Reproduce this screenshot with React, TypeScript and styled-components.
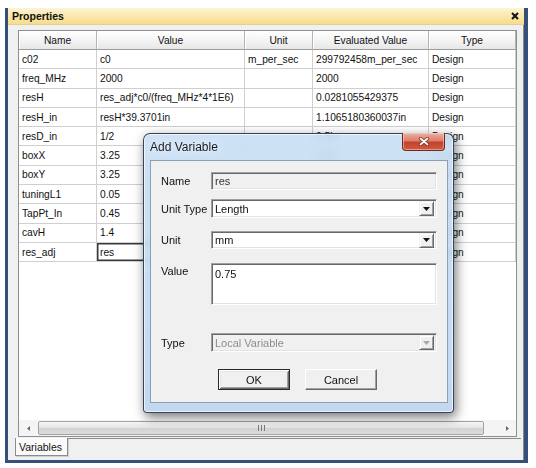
import React from "react";
import styled, { createGlobalStyle, css } from "styled-components";

const Global = createGlobalStyle`
  html, body { margin: 0; padding: 0; background: #fff; }
  body { font-family: "Liberation Sans", Arial, sans-serif; }
  * { box-sizing: border-box; }
`;

const Page = styled.div`
  position: relative;
  width: 536px;
  height: 468px;
  overflow: hidden;
  background: #fff;
  padding: 8px 8px 0 5px;
`;

const Frame = styled.div`
  width: 523px;
  height: 455px;
  border-left: 3px solid #34507a;
  border-right: 4px solid #34507a;
  border-bottom: 3px solid #34507a;
  display: flex;
  flex-direction: column;
`;

const TitleBar = styled.div`
  height: 17px;
  flex: none;
  display: flex;
  align-items: center;
  justify-content: space-between;
  padding: 0 5px 0 4px;
  background: linear-gradient(180deg, #fdf4d6 0%, #fae6a8 55%, #f6dc8f 100%);
  border-bottom: 1px solid #e6cf8a;
  font-weight: bold;
  font-size: 10.5px;
  color: #111;
`;

const Body = styled.div`
  flex: 1;
  background: #f0f0f0;
  display: flex;
  flex-direction: column;
  padding-top: 5px;
  border-right: 1px solid #8a8a8a;
`;

const GridBox = styled.div`
  margin: 0 6px 0 10px;
  height: 407px;
  border: 1px solid #8e8f8f;
  background: #fff;
  display: flex;
  flex-direction: column;
`;

const Viewport = styled.div`
  flex: 1;
  overflow: hidden;
`;

const cols = "78px 148px 68px 116px 87px";

const Row = styled.div<{ $h: number }>`
  display: grid;
  grid-template-columns: ${cols};
  height: ${(p) => p.$h}px;
`;

const HeadCell = styled.div`
  display: flex;
  align-items: center;
  justify-content: center;
  font-size: 10.2px;
  color: #111;
  background: linear-gradient(180deg, #ffffff 0%, #f3f3f3 55%, #e7e7e7 100%);
  border-right: 1px solid #b4b4b4;
  border-bottom: 1px solid #9c9c9c;
  box-shadow: inset 1px 1px 0 #fff;
`;

const Cell = styled.div<{ $editing?: boolean }>`
  display: flex;
  align-items: center;
  padding-left: 3px;
  font-size: 10.2px;
  color: #111;
  white-space: nowrap;
  overflow: hidden;
  border-right: 1px solid #cfcfcf;
  border-bottom: 1px solid #cfcfcf;
  ${(p) =>
    p.$editing &&
    css`
      box-shadow: inset 0 0 0 1.5px #3a3a3a;
    `}
`;

const HScroll = styled.div`
  height: 16px;
  flex: none;
  display: flex;
  align-items: center;
  background: #f4f4f4;
`;

const ArrowBtn = styled.div<{ $w: number }>`
  width: ${(p) => p.$w}px;
  height: 16px;
  display: flex;
  align-items: center;
  justify-content: center;
`;

const Track = styled.div`
  flex: 1;
  height: 16px;
  display: flex;
  align-items: center;
  padding-left: 1px;
`;

const Thumb = styled.div`
  width: 446px;
  height: 14px;
  border: 1px solid #a3a3a3;
  border-radius: 2px;
  background: linear-gradient(180deg, #f6f6f6 0%, #e4e4e4 50%, #d3d3d3 51%, #dcdcdc 100%);
  display: flex;
  align-items: center;
  justify-content: center;
`;

const TabBar = styled.div`
  display: flex;
  height: 19px;
  padding-left: 7px;
  margin-top: 1px;
`;

const Tab = styled.div`
  width: 53px;
  height: 18px;
  background: #fbfbfb;
  border: 1px solid #898c95;
  border-top: none;
  box-shadow: 1px 1px 0 #cfcfcf;
  font-size: 10.5px;
  color: #111;
  display: flex;
  align-items: center;
  padding-left: 3px;
`;

const TabFiller = styled.div`
  flex: 1;
  border-top: 1px solid #898c95;
  margin-right: 2px;
`;

/* ---------- Dialog ---------- */

const Dialog = styled.div`
  position: absolute;
  left: 143px;
  top: 133px;
  width: 311px;
  height: 280px;
  border: 1px solid rgba(38, 52, 72, 0.9);
  border-radius: 7px 7px 4px 4px;
  background: linear-gradient(180deg, rgba(198, 221, 244, 0.86) 0%, rgba(186, 211, 238, 0.88) 100%);
  backdrop-filter: blur(4px);
  box-shadow: 2px 4px 12px rgba(0, 0, 0, 0.55), inset 0 0 0 1px rgba(255, 255, 255, 0.65);
  display: flex;
  flex-direction: column;
  padding: 0 5px 9px 6px;
  font-family: "Liberation Sans", Arial, sans-serif;
`;

const DlgTitle = styled.div`
  height: 26px;
  flex: none;
  display: flex;
  align-items: center;
  font-size: 12px;
  color: #1c1c1c;
  text-shadow: 0 0 6px rgba(255, 255, 255, 0.9);
`;

const DlgClose = styled.div`
  position: absolute;
  top: -1px;
  right: 8px;
  width: 43px;
  height: 18px;
  border: 1px solid #6e2a20;
  border-top: none;
  border-radius: 0 0 4px 4px;
  background: linear-gradient(180deg, #eab1a4 0%, #dd7e6b 45%, #c4422c 55%, #cf5a3f 100%);
  display: flex;
  align-items: center;
  justify-content: center;
  box-shadow: inset 0 0 0 1px rgba(255, 220, 210, 0.5);
`;

const Client = styled.div`
  flex: 1;
  background: #f0f0f0;
  border: 1px solid #8f9fb3;
  padding: 11px 10px 0 10px;
  display: flex;
  flex-direction: column;
`;

const FormRow = styled.div<{ $gap: number; $top?: boolean }>`
  display: flex;
  align-items: ${(p) => (p.$top ? "flex-start" : "center")};
  margin-top: ${(p) => p.$gap}px;
`;

const Label = styled.div<{ $pt?: number }>`
  width: 50px;
  flex: none;
  font-size: 11px;
  color: #111;
  padding-top: ${(p) => p.$pt ?? 0}px;
  white-space: nowrap;
`;

const sunken = css`
  border-top: 1px solid #a0a0a0;
  border-left: 1px solid #a0a0a0;
  border-right: 1px solid #ffffff;
  border-bottom: 1px solid #ffffff;
  box-shadow: inset 1px 1px 0 #696969, inset -1px -1px 0 #e3e3e3;
`;

const Field = styled.div<{ $h: number; $bg?: string; $color?: string; $top?: boolean }>`
  ${sunken};
  width: 226px;
  height: ${(p) => p.$h}px;
  background: ${(p) => p.$bg ?? "#fff"};
  color: ${(p) => p.$color ?? "#111"};
  font-size: 11px;
  display: flex;
  align-items: ${(p) => (p.$top ? "flex-start" : "center")};
  padding: ${(p) => (p.$top ? "4px 3px" : "0 2px 0 3px")};
`;

const FieldText = styled.span`
  flex: 1;
`;

const DropBtn = styled.div`
  width: 15px;
  height: 15px;
  flex: none;
  background: #f0f0f0;
  border-top: 1px solid #f0f0f0;
  border-left: 1px solid #f0f0f0;
  border-right: 1px solid #696969;
  border-bottom: 1px solid #696969;
  box-shadow: inset 1px 1px 0 #fff, inset -1px -1px 0 #a0a0a0;
  display: flex;
  align-items: center;
  justify-content: center;
`;

const ButtonRow = styled.div`
  display: flex;
  gap: 15px;
  padding-left: 57px;
  margin-top: 17px;
`;

const Btn = styled.div<{ $default?: boolean }>`
  width: 72px;
  height: 21px;
  font-size: 11px;
  color: #111;
  display: flex;
  align-items: center;
  justify-content: center;
  background: #f0f0f0;
  ${(p) =>
    p.$default
      ? css`
          border: 1px solid #2a2a2a;
          box-shadow: inset 1px 1px 0 #fff, inset -1px -1px 0 #696969, inset 2px 2px 0 #e6e6e6,
            inset -2px -2px 0 #a0a0a0;
        `
      : css`
          border-top: 1px solid #fff;
          border-left: 1px solid #fff;
          border-right: 1px solid #696969;
          border-bottom: 1px solid #696969;
          box-shadow: inset -1px -1px 0 #a0a0a0;
        `}
`;

/* ---------- Data ---------- */

type R = [string, string, string, string, string];
const rows: R[] = [
  ["c02", "c0", "m_per_sec", "299792458m_per_sec", "Design"],
  ["freq_MHz", "2000", "", "2000", "Design"],
  ["resH", "res_adj*c0/(freq_MHz*4*1E6)", "", "0.0281055429375", "Design"],
  ["resH_in", "resH*39.3701in", "", "1.1065180360037in", "Design"],
  ["resD_in", "1/2", "", "0.5in", "Design"],
  ["boxX", "3.25", "", "3.25", "Design"],
  ["boxY", "3.25", "", "3.25", "Design"],
  ["tuningL1", "0.05", "", "0.05", "Design"],
  ["TapPt_In", "0.45", "", "0.45", "Design"],
  ["cavH", "1.4", "", "1.4", "Design"],
  ["res_adj", "res", "", "0.75", "Design"],
];

const Tri = ({ dir, color = "#111" }: { dir: "down" | "left" | "right"; color?: string }) => {
  if (dir === "down")
    return (
      <svg width="7" height="4" viewBox="0 0 7 4">
        <path d="M0 0 H7 L3.5 4 Z" fill={color} />
      </svg>
    );
  if (dir === "left")
    return (
      <svg width="3" height="5" viewBox="0 0 3 5">
        <path d="M3 0 V5 L0 2.5 Z" fill={color} />
      </svg>
    );
  return (
    <svg width="3" height="5" viewBox="0 0 3 5">
      <path d="M0 0 V5 L3 2.5 Z" fill={color} />
    </svg>
  );
};

export default function App() {
  return (
    <Page>
      <Global />
      <Frame>
        <TitleBar>
          <span>Properties</span>
          <svg width="8" height="8" viewBox="0 0 8 8">
            <path d="M1 1 L7 7 M7 1 L1 7" stroke="#111" strokeWidth="2" />
          </svg>
        </TitleBar>
        <Body>
          <GridBox>
            <Viewport>
              <Row $h={19}>
                {["Name", "Value", "Unit", "Evaluated Value", "Type"].map((h) => (
                  <HeadCell key={h}>{h}</HeadCell>
                ))}
              </Row>
              {rows.map((r) => (
                <Row $h={19.3} key={r[0]}>
                  {r.map((c, i) => (
                    <Cell key={i} $editing={r[0] === "res_adj" && i === 1}>
                      {c}
                    </Cell>
                  ))}
                </Row>
              ))}
            </Viewport>
            <HScroll>
              <ArrowBtn $w={18}>
                <Tri dir="left" color="#6a6a6a" />
              </ArrowBtn>
              <Track>
                <Thumb>
                  <svg width="7" height="6" viewBox="0 0 7 6">
                    <path d="M0.5 0 V6 M3.5 0 V6 M6.5 0 V6" stroke="#7a7a7a" strokeWidth="1" />
                  </svg>
                </Thumb>
              </Track>
              <ArrowBtn $w={17}>
                <Tri dir="right" color="#6a6a6a" />
              </ArrowBtn>
            </HScroll>
          </GridBox>
          <TabBar>
            <Tab>Variables</Tab>
            <TabFiller />
          </TabBar>
        </Body>
      </Frame>

      <Dialog>
        <DlgTitle>Add Variable</DlgTitle>
        <DlgClose>
          <svg width="10" height="9" viewBox="0 0 10 9">
            <path d="M1.5 1.5 L8.5 7.5 M8.5 1.5 L1.5 7.5" stroke="#6a2418" strokeWidth="3.2" strokeLinecap="round" />
            <path d="M1.5 1.5 L8.5 7.5 M8.5 1.5 L1.5 7.5" stroke="#ffffff" strokeWidth="1.8" strokeLinecap="round" />
          </svg>
        </DlgClose>
        <Client>
          <FormRow $gap={0}>
            <Label>Name</Label>
            <Field $h={18} $bg="#f0f0f0" $color="#333">
              <FieldText>res</FieldText>
            </Field>
          </FormRow>
          <FormRow $gap={9}>
            <Label>Unit Type</Label>
            <Field $h={19}>
              <FieldText>Length</FieldText>
              <DropBtn>
                <Tri dir="down" />
              </DropBtn>
            </Field>
          </FormRow>
          <FormRow $gap={13}>
            <Label>Unit</Label>
            <Field $h={18}>
              <FieldText>mm</FieldText>
              <DropBtn>
                <Tri dir="down" />
              </DropBtn>
            </Field>
          </FormRow>
          <FormRow $gap={14} $top>
            <Label $pt={2}>Value</Label>
            <Field $h={42} $top>
              <FieldText>0.75</FieldText>
            </Field>
          </FormRow>
          <FormRow $gap={28}>
            <Label>Type</Label>
            <Field $h={19} $bg="#f0f0f0" $color="#8d8d8d">
              <FieldText>Local Variable</FieldText>
              <DropBtn>
                <Tri dir="down" color="#a8a8a8" />
              </DropBtn>
            </Field>
          </FormRow>
          <ButtonRow>
            <Btn $default>OK</Btn>
            <Btn>Cancel</Btn>
          </ButtonRow>
        </Client>
      </Dialog>
    </Page>
  );
}
